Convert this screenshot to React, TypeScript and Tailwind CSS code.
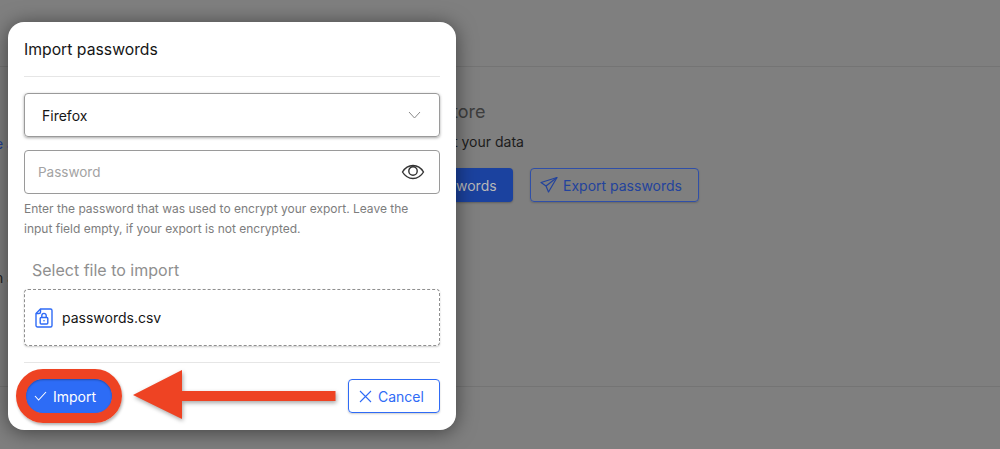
function FileLockIcon() {
  return (
    <svg width="18" height="20" viewBox="0 0 18 20" fill="none" stroke="#2f6bf6" strokeWidth="1.4">
      <path d="M5.5 1H15.5a1.5 1.5 0 0 1 1.5 1.5v15a1.5 1.5 0 0 1-1.5 1.5h-13A1.5 1.5 0 0 1 1 17.5V5.5z" />
      <path d="M5.5 1v3a1.5 1.5 0 0 1-1.5 1.5H1" />
      <rect x="5.2" y="9.5" width="7.6" height="6.5" rx="1" />
      <path d="M6.8 9.5V7.6a2.2 2.2 0 0 1 4.4 0v1.9" />
      <circle cx="9" cy="12.7" r="0.8" fill="#2f6bf6" stroke="none" />
    </svg>
  );
}

function EyeIcon() {
  return (
    <svg width="24" height="16" viewBox="0 0 24 16" fill="none" stroke="#333" strokeWidth="1.4">
      <path d="M1.5 8C4 3.8 7.6 1.5 12 1.5S20 3.8 22.5 8C20 12.2 16.400 14.5 12 14.5S4 12.2 1.5 8z" />
      <circle cx="12" cy="7" r="4.2" />
    </svg>
  );
}

function PlaneIcon() {
  return (
    <svg width="18" height="18" viewBox="0 0 18 18" fill="none" stroke="currentColor" strokeWidth="1.2" strokeLinejoin="round">
      <path d="M17 1.500 1 6.500l5 3.500 2.500 6z" />
      <path d="M17 1.500 6 10" />
    </svg>
  );
}

function Arrow() {
  return (
    <svg
      className="absolute left-[130px] top-[367px] drop-shadow-[1px_2px_2px_rgba(0,0,0,0.35)]"
      width="210"
      height="55"
      viewBox="0 0 210 55"
    >
      <path d="M3 28 52 3v21h153.500v10H52v18z" fill="#ee4323" />
    </svg>
  );
}

export default function App() {
  return (
    <div className="relative h-[449px] w-[1000px] overflow-hidden bg-[#7f7f7f] font-['Inter',sans-serif]">
      {/* page behind the overlay */}
      <div className="h-[67px] border-b border-[#747474]" />
      <div className="flex h-[320px] border-b border-[#747474]">
        <div className="w-[456px] pt-[66px] text-[14px]">
          <p className="-ml-[5px] text-[#1f3f94]">e a</p>
          <p className="-ml-[5px] mt-[113px] text-[#222]">n a</p>
        </div>
        <div>
          <h2 className="-ml-[4px] mt-[33px] text-[18px] leading-[24px] text-[#3d3d3d]">tore</h2>
          <p className="-ml-[3px] mt-[8px] text-[14px] leading-[20px] text-[#1c1c1c]">t your data</p>
          <div className="mt-[16px] flex gap-[17px]">
            <div className="flex h-[34px] w-[57px] items-center rounded-r-[4px] bg-[#1b429f] text-[14px] text-[#b8b8b8] shadow-[0_1px_2px_rgba(0,0,0,0.25)]">
              words
            </div>
            <div className="flex h-[34px] w-[169px] items-center gap-[5px] rounded-[4px] border border-[#2f4fa8] pl-[9px] text-[14px] text-[#23439c] shadow-[0_1px_2px_rgba(0,0,0,0.2)]">
              <PlaneIcon />
              Export passwords
            </div>
          </div>
        </div>
      </div>

      {/* modal */}
      <div className="absolute left-[8px] top-[22px] flex h-[408px] w-[448px] flex-col rounded-[16px] bg-white px-4 shadow-[0_2px_20px_rgba(0,0,0,0.5)]">
        <div className="flex h-[55px] items-center border-b border-[#e6e6e6] pt-[2px] text-[15.75px] text-[#161616]">
          Import passwords
        </div>
        <div className="mt-[16px] flex h-[44px] items-center justify-between rounded-[4px] border border-[#9a9a9a] pl-[17px] pr-[18px] text-[14px] text-[#161616] shadow-[0_1px_3px_rgba(0,0,0,0.35)]">
          Firefox
          <svg width="13" height="8" viewBox="0 0 13 8" fill="none" stroke="#8a8a8a" strokeWidth="1">
            <path d="M1 1l5.500 6L12 1" />
          </svg>
        </div>
        <div className="mt-[13px] flex h-[44px] items-center justify-between rounded-[4px] border border-[#9a9a9a] pl-[13px] pr-[14px] text-[13.5px] text-[#a3a3a3]">
          Password
          <EyeIcon />
        </div>
        <p className="mt-[5px] text-[12px] leading-[20px] text-[#7d7d7d]">
          Enter the password that was used to encrypt your export. Leave the
          <br />
          input field empty, if your export is not encrypted.
        </p>
        <div className="mt-[19px] pl-2 text-[16px] leading-[24px] text-[#8f8f8f]">Select file to import</div>
        <div className="mt-[7px] flex h-[57px] items-center gap-[9px] rounded-[4px] border border-dashed border-[#8f8f8f] pl-[10px] text-[14px] text-[#161616] shadow-[0_1px_2px_rgba(0,0,0,0.2)]">
          <FileLockIcon />
          passwords.csv
        </div>
        <div className="mt-[16px] flex items-start justify-between border-t border-[#e6e6e6] pt-[16px]">
          <div className="relative ml-[2px] flex h-[34px] w-[86px] items-center gap-[6px] rounded-[14px] bg-[#2d6cf6] pl-[8px] text-[14px] text-white">
            <svg width="13" height="10" viewBox="0 0 13 10" fill="none" stroke="white" strokeWidth="1.1">
              <path d="M1 5l3.600 4L12 1" />
            </svg>
            Import
            <div className="absolute -inset-x-[10px] -inset-y-[10px] rounded-[27px] border-[10px] border-[#ee4323] shadow-[1px_2px_3px_rgba(0,0,0,0.3),inset_0_1px_2px_rgba(0,0,0,0.3)]" />
          </div>
          <div className="flex h-[34px] w-[92px] items-center gap-[6px] rounded-[4px] border border-[#2f6bf6] pl-[10px] text-[14px] text-[#2f6bf6] shadow-[0_1px_2px_rgba(0,0,0,0.2)]">
            <svg width="13" height="13" viewBox="0 0 13 13" fill="none" stroke="#2f6bf6" strokeWidth="1.1">
              <path d="M1 1l11 11M12 1 1 12" />
            </svg>
            Cancel
          </div>
        </div>
      </div>
      <Arrow />
    </div>
  );
}
